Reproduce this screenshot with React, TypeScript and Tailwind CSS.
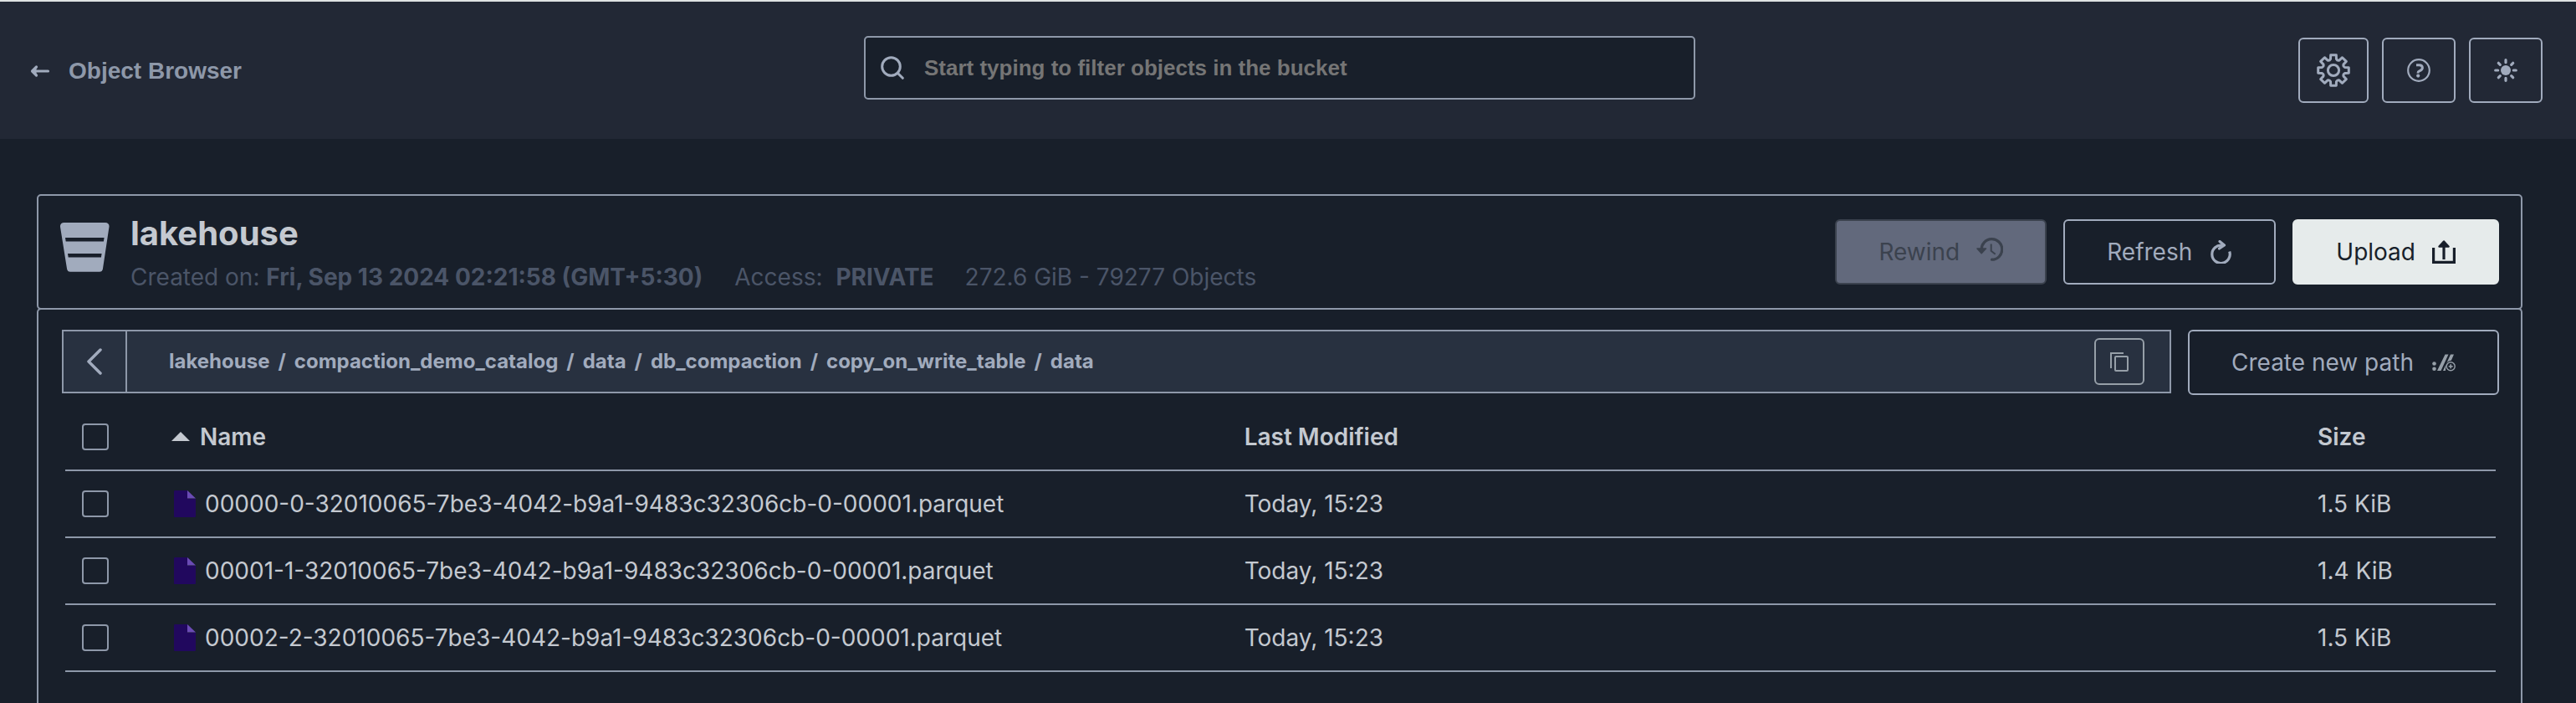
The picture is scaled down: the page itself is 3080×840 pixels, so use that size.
import React from "react";

const files = [
  { name: "00000-0-32010065-7be3-4042-b9a1-9483c32306cb-0-00001.parquet", modified: "Today, 15:23", size: "1.5 KiB" },
  { name: "00001-1-32010065-7be3-4042-b9a1-9483c32306cb-0-00001.parquet", modified: "Today, 15:23", size: "1.4 KiB" },
  { name: "00002-2-32010065-7be3-4042-b9a1-9483c32306cb-0-00001.parquet", modified: "Today, 15:23", size: "1.5 KiB" },
];

const path = ["lakehouse", "compaction_demo_catalog", "data", "db_compaction", "copy_on_write_table", "data"];

function ArrowLeft() {
  return (
    <svg className="h-4 w-6 shrink-0" viewBox="0 0 24 16" fill="none" stroke="currentColor" strokeWidth="3.2" strokeLinecap="round" strokeLinejoin="round">
      <path d="M21.500 8H3M7.500 3L2.500 8l5 5" />
      <path d="M3 8l4-3v6z" fill="currentColor" strokeWidth="1" />
    </svg>
  );
}

function SearchIcon() {
  return (
    <svg className="h-7 w-7 shrink-0" viewBox="0 0 28 28" fill="none" stroke="currentColor" strokeWidth="3" strokeLinecap="round">
      <circle cx="12.500" cy="12.500" r="10.800" />
      <path d="M20.500 20.500l5.800 5.800" />
    </svg>
  );
}

const gearPath = (() => {
  const pts: string[] = [];
  for (let i = 0; i < 8; i++) {
    const a = (i * Math.PI) / 4 - Math.PI / 2;
    const at = (r: number, off: number) =>
      `${(20 + r * Math.cos(a + off)).toFixed(2)} ${(20 + r * Math.sin(a + off)).toFixed(2)}`;
    pts.push(`${i === 0 ? "M" : "L"}${at(14, -0.25)}`, `L${at(18.6, -0.18)}`, `L${at(18.6, 0.18)}`, `L${at(14, 0.25)}`);
    pts.push(`Q${at(12.2, 0.39)} ${at(14, 0.535)}`);
  }
  return pts.join("") + "Z";
})();

function GearIcon() {
  return (
    <svg className="h-10 w-10" viewBox="0 0 40 40" fill="none" stroke="currentColor" strokeWidth="3" strokeLinejoin="round">
      <path d={gearPath} />
      <circle cx="20" cy="20" r="6.6" />
    </svg>
  );
}

function HelpIcon() {
  return (
    <svg className="h-7 w-7" viewBox="0 0 28 28" fill="none" stroke="currentColor" strokeWidth="2.2">
      <circle cx="14" cy="14" r="12.8" />
      <path d="M11 7.700h3.500c2.400 0 3.900 1.300 3.900 3.300 0 2.400-2 3.100-3.900 3.900-1.100.4-1.500 1-1.500 2.500" strokeWidth="3" />
      <circle cx="13.200" cy="20.600" r="2.100" fill="currentColor" stroke="none" />
    </svg>
  );
}

function SunIcon() {
  return (
    <svg className="h-7 w-7" viewBox="0 0 28 28" fill="none" stroke="currentColor" strokeWidth="3.2" strokeLinecap="round">
      <circle cx="14" cy="14" r="6" fill="currentColor" stroke="none" />
      <path d="M14 1.700v3M14 23.300v3M1.700 14h3M23.300 14h3M5.300 5.300l2 2M20.700 20.700l2 2M22.700 5.300l-2 2M7.300 20.700l-2 2" />
    </svg>
  );
}

function BucketIcon() {
  return (
    <svg className="h-[60px] w-[60px] shrink-0" viewBox="0 0 60 60" fill="currentColor" fillRule="evenodd">
      <path d="M4.500 0h49.500c3 0 4.900 2.200 4.500 5l-7.600 50.500c-.4 2-1.700 3.300-3.900 3.300H12c-2.200 0-3.500-1.300-3.900-3.300L0 5C-.3 2.200 1.500 0 4.500 0zM6 18l.7 4.400h45.200l.7-4.400zM9 37l.7 4.600h39.200l.7-4.600z" />
    </svg>
  );
}

function RewindIcon() {
  return (
    <svg className="h-[34px] w-8" viewBox="0 0 32 34" fill="none" stroke="currentColor" strokeWidth="3.2">
      <path d="M6.200 14.500A12.300 12.300 0 1 1 18.500 26.200" strokeLinecap="round" />
      <path d="M1 13h10.500L6.200 18.800z" fill="currentColor" strokeWidth="1.500" strokeLinejoin="round" />
      <path d="M17.700 7.500v8.300l5 4" strokeWidth="2" />
    </svg>
  );
}

function RefreshIcon() {
  return (
    <svg className="h-7 w-7" viewBox="0 0 28 28" fill="none" stroke="currentColor" strokeWidth="3.200">
      <path d="M16 6.200A10.700 10.700 0 1 0 24.700 13.500" />
      <path d="M13 1.500l5.500 4.500-6 4" strokeLinejoin="round" strokeLinecap="round" />
    </svg>
  );
}

function UploadIcon() {
  return (
    <svg className="h-7 w-7" viewBox="0 0 28 28" fill="none" stroke="currentColor" strokeWidth="3.200">
      <path d="M1.600 9v17.400h24.800V9" />
      <path d="M14 23V5" />
      <path d="M14 1.500l5.500 6h-11z" fill="currentColor" strokeWidth="2.500" strokeLinejoin="round" />
    </svg>
  );
}

function NewPathIcon() {
  return (
    <svg className="h-7 w-7" viewBox="0 0 28 28" fill="currentColor">
      <circle cx="2.500" cy="15.500" r="2.300" />
      <circle cx="2.500" cy="21.700" r="2.300" />
      <path d="M15.500 4.500h4L10.500 24H6zM22 4.500h4l-3.200 7.200c-4 .5-6.300 3-6.300 6.300l-.6 6H13z" />
      <circle cx="22.200" cy="18.700" r="5" fill="none" stroke="currentColor" strokeWidth="1.400" />
      <path d="M19.700 17.900h1.700v-1.700H23v1.700h1.700v1.600H23v1.700h-1.600v-1.700h-1.700z" />
    </svg>
  );
}

function CopyIcon() {
  return (
    <svg className="h-6 w-6" viewBox="0 0 24 24" fill="none" stroke="currentColor" strokeWidth="2">
      <path d="M2 20V2h15" />
      <rect x="7" y="6" width="15" height="17" rx="1" />
    </svg>
  );
}

function FileIcon() {
  return (
    <svg className="h-8 w-[26px] shrink-0" viewBox="0 0 26 32">
      <path d="M1.500 0H16v10h10v20.500c0 1-.5 1.500-1.500 1.500h-23C.5 32 0 31.500 0 30.500v-29C0 .5.500 0 1.500 0z" fill="#21085e" />
      <path d="M16 0l10 9.500H16z" fill="#6b4bb5" />
    </svg>
  );
}

const boxClass =
  "block h-8 w-8 appearance-none rounded-[4px] border-2 border-[#8e98a9] bg-transparent checked:bg-[#8e98a9]";
const actionClass = "flex h-[78px] items-center gap-5 rounded-md border-2 px-[50px] text-[28px]";
const iconButton = "flex h-[78px] items-center justify-center rounded-md border-2 border-[#a1abbd]";

export default function App() {
  return (
    <div className="flex min-h-screen flex-col bg-[#181f2a] font-['Inter',sans-serif] text-[#c4c9d0]">
      <header className="grid h-[166px] grid-cols-[1fr_994px_1fr] border-t-2 border-[#dfe3e3] bg-[#222835] pr-10 pl-5 text-[#a1abbd]">
        <a href="#browser" className="flex items-center gap-[22px] self-start pt-[63px] pl-4 font-['Liberation_Sans',sans-serif] text-[28px] leading-[40px] font-bold text-[#8e98a9]">
          <span className="text-[#a1abbd]"><ArrowLeft /></span>
          Object Browser
        </a>
        <label className="mt-[41px] flex h-[76px] items-center gap-6 rounded-[5px] border-2 border-[#8e98a9] bg-[#181f2a] px-[18px]">
          <SearchIcon />
          <input
            type="search"
            aria-label="Filter objects"
            placeholder="Start typing to filter objects in the bucket"
            className="min-w-0 flex-1 bg-transparent font-['Liberation_Sans',sans-serif] text-[26px] font-bold outline-none placeholder:text-[#757575]"
          />
        </label>
        <div className="mt-[43px] flex items-start justify-end gap-4">
          <button aria-label="Settings" className={iconButton + " w-[84px]"}><GearIcon /></button>
          <button aria-label="Help" className={iconButton + " w-[88px]"}><HelpIcon /></button>
          <button aria-label="Toggle theme" className={iconButton + " w-[88px]"}><SunIcon /></button>
        </div>
      </header>

      <main className="flex flex-1 flex-col pt-[66px] pr-16 pl-11">
        <section className="flex h-[138px] items-center justify-between rounded-[5px] border-2 border-[#8e98a9] px-[26px]">
          <div className="flex items-start gap-6">
            <div className="pt-[19px] text-[#a1abbd]"><BucketIcon /></div>
            <div className="pt-2">
              <h1 className="text-[40px] leading-[48px] font-bold">lakehouse</h1>
              <p className="mt-1 flex text-[28px] leading-[48px] text-[#4b5568]">
                <span className="mr-[38px]">Created on: <b>Fri, Sep 13 2024 02:21:58 (GMT+5:30)</b></span>
                <span className="mr-[37px]">Access: <b className="ml-2">PRIVATE</b></span>
                <span>272.6 GiB - 79277 Objects</span>
              </p>
            </div>
          </div>
          <div className="flex gap-5">
            <button disabled className={actionClass + " border-[#3b424e] bg-[#62697c] text-[#3b424e]"}>Rewind <RewindIcon /></button>
            <button className={actionClass + " border-[#a1abbd] text-[#a1abbd]"}>Refresh <RefreshIcon /></button>
            <button className={actionClass + " border-[#e6ebeb] bg-[#e6ebeb] text-[#181f2a]"}>Upload <UploadIcon /></button>
          </div>
        </section>

        <section className="-mt-[2px] flex-1 rounded-t-[5px] border-2 border-b-0 border-[#8e98a9] px-[26px] pt-6">
          <div className="ml-[2px] flex items-start gap-5">
            <nav aria-label="Path" className="flex h-[76px] flex-1 items-center border-2 border-[#8e98a9] bg-[#283140] text-[#a1abbd]">
              <button aria-label="Up one level" className="flex h-full w-[76px] items-center justify-center border-r-2 border-[#8e98a9]">
                <svg className="h-8 w-5" viewBox="0 0 20 32" fill="none" stroke="currentColor" strokeWidth="3.500" strokeLinecap="round" strokeLinejoin="round">
                  <path d="M17 2L3 16l14 14" />
                </svg>
              </button>
              <ol className="ml-[50px] flex flex-1 gap-[10px] text-[24px] font-bold">
                {path.map((part, i) => (
                  <li key={i} className="flex gap-[10px]">
                    {i > 0 && <span>/</span>}
                    <a href="#path">{part}</a>
                  </li>
                ))}
              </ol>
              <button aria-label="Copy path" className="mr-[30px] flex h-14 w-[60px] items-center justify-center rounded-md border-2 border-[#969fa8] text-[#969fa8]">
                <CopyIcon />
              </button>
            </nav>
            <button className={actionClass + " w-[372px] justify-between border-[#a1abbd] text-[#a1abbd]"}>
              Create new path <span className="text-[#969fa8]"><NewPathIcon /></span>
            </button>
          </div>

          <div className="mt-[10px] pr-1 pl-[6px]">
            <table className="w-full table-fixed border-collapse text-left text-[28px]">
              <colgroup>
                <col className="w-[127px]" />
                <col className="w-[44%]" />
                <col />
                <col className="w-[213px]" />
              </colgroup>
              <thead>
                <tr className="h-20 border-b-2 border-[#8e98a9]">
                  <th className="pl-5"><input type="checkbox" aria-label="Select all" className={boxClass} /></th>
                  <th className="font-semibold">
                    <span className="flex items-center gap-3">
                      <svg className="h-[11px] w-[22px]" viewBox="0 0 22 11" fill="currentColor"><path d="M11 0l11 11H0z" /></svg>
                      Name
                    </span>
                  </th>
                  <th className="pl-1 font-semibold">Last Modified</th>
                  <th className="font-semibold">Size</th>
                </tr>
              </thead>
              <tbody>
                {files.map((f) => (
                  <tr key={f.name} className="h-20 border-b-2 border-[#8e98a9]">
                    <td className="pl-5"><input type="checkbox" aria-label={"Select " + f.name} className={boxClass} /></td>
                    <td><span className="flex items-center gap-[11px] pl-[3px]"><FileIcon />{f.name}</span></td>
                    <td className="pl-1">{f.modified}</td>
                    <td>{f.size}</td>
                  </tr>
                ))}
              </tbody>
            </table>
          </div>
        </section>
      </main>
    </div>
  );
}
